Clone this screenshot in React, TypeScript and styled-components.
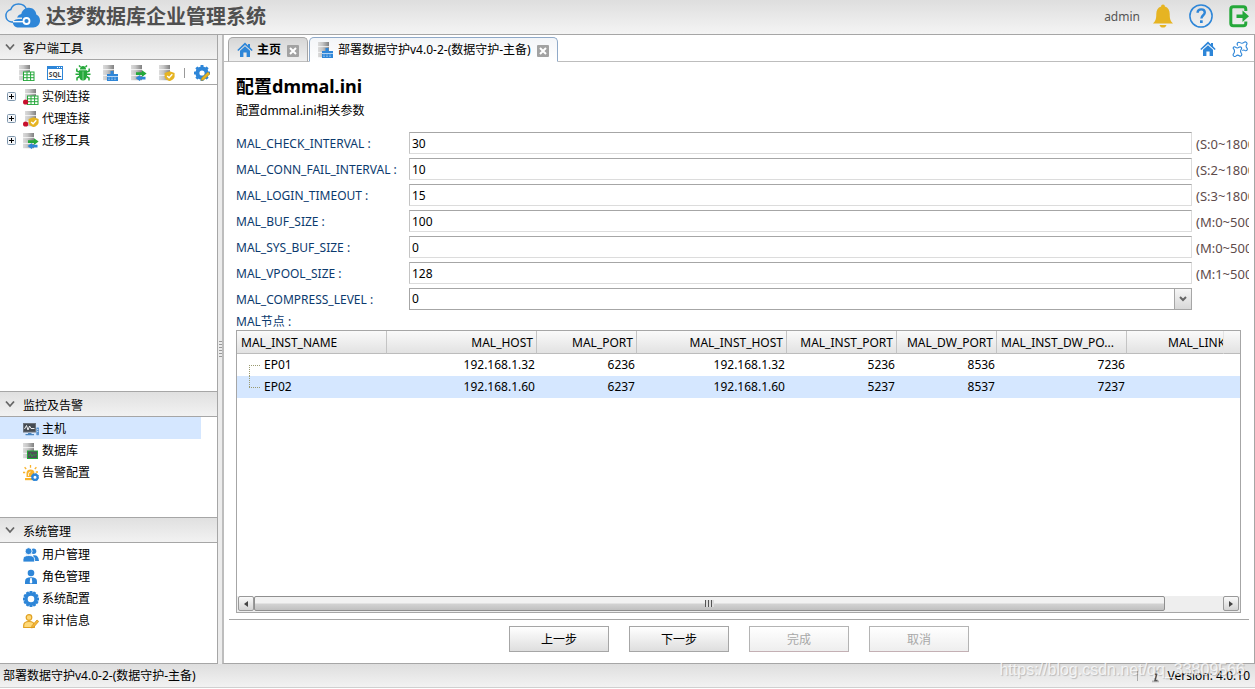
import React from 'react';
import styled, { createGlobalStyle, css } from 'styled-components';

const line = '#a6a6a6';
const blue = '#2e86d8';
const green = '#25a83a';
const gold = '#e6b422';
const selected = '#d5e7ff';

const GlobalStyle = createGlobalStyle`
  *, *::before, *::after { box-sizing: border-box; }
  body {
    margin: 0;
    background: #fff;
    color: #000;
    font: 12px/16px "Noto Sans", "Noto Sans CJK SC", sans-serif;
  }
  button, input, select { font: inherit; color: inherit; margin: 0; }
  svg { display: block; flex: none; }
`;

/* ---------- icons ---------- */

type IconProps = { size?: number; children?: React.ReactNode; box?: string };
const Icon = ({ size = 16, box = '0 0 16 16', children }: IconProps) => (
  <svg width={size} height={size} viewBox={box} aria-hidden="true">
    {children}
  </svg>
);

const Rack = ({ x = 0 }: { x?: number }) => (
  <g>
    <rect x={x} y="0" width="11" height="4.4" fill="url(#rack)" />
    <rect x={x} y="5" width="11" height="5" fill="url(#rack)" />
    <rect x={x} y="10.6" width="11" height="4.6" fill="url(#rack)" />
    <path d={`M${x} 4.7h11M${x} 10.3h11`} stroke="#f6f6f6" strokeWidth=".6" />
  </g>
);

const Sheet = () => (
  <g>
    <rect x="4.5" y="7" width="10.5" height="8.6" fill="#fff" stroke={green} strokeWidth="1" />
    <path d="M4.5 9.8h10.5M4.5 12.7h10.5M8 7v8.6M11.6 7v8.6" stroke={green} strokeWidth="1" />
  </g>
);
const Shield = () => (
  <g>
    <path d="M10.6 6.2l5 1.900v3.100c0 2.300-1.900 3.800-5 5-3.100-1.200-5-2.700-5-5V8.100z" fill={gold} />
    <path d="M8.200 10.900l1.900 1.900 3.200-3.500" fill="none" stroke="#fff" strokeWidth="1.400" />
  </g>
);
const Arrows = () => (
  <g>
    <path d="M5 7.200h6V5.200l4.600 3.400-4.600 3.300V9.900H5z" fill={green} />
    <path d="M14.500 11.800h-5.400V10l-4.600 3.100 4.600 3.100v-1.800h5.400z" fill={blue} />
  </g>
);
const RedDot = () => <circle cx="2.600" cy="13" r="2.600" fill="#c8102e" />;

const ServerSheet = () => <Icon><Rack /><Sheet /></Icon>;
const ServerShield = () => <Icon><Rack /><Shield /></Icon>;
const ServerArrows = () => <Icon><Rack /><Arrows /></Icon>;
const ServerDeploy = () => (
  <Icon>
    <Rack />
    <path d="M4 9h3.500V6h3v3H15v7H4z" fill={blue} />
    <path d="M4 11.500h11M5.500 14.500h1M8.500 14.500h1M11.500 14.500h1M5.500 13h1M8.500 13h1M11.500 13h1" stroke="#d5e9fb" strokeWidth=".8" />
  </Icon>
);
const ServerSheetDot = () => <Icon><Rack x={2} /><Sheet /><RedDot /></Icon>;
const ServerShieldDot = () => <Icon><Rack x={2} /><Shield /><RedDot /></Icon>;
const ServerMonitor = () => (
  <Icon>
    <Rack />
    <rect x="4.500" y="8" width="10" height="7.500" fill="#4d5257" stroke={green} />
    <path d="M6 13l1.500-2.500 1.500 3 1.500-2 1.500 1 1.500-1.500" fill="none" stroke={green} strokeWidth=".9" />
  </Icon>
);
const SqlIcon = () => (
  <Icon>
    <rect x=".5" y="1.500" width="15" height="13" fill="#fff" stroke={blue} />
    <path d="M0 1h16v3H0z" fill={blue} />
    <path d="M10 2.500h1M12 2.500h1M14 2.500h1" stroke="#fff" strokeWidth="1" />
    <text x="8" y="11.800" textAnchor="middle" fontSize="6.500" fontWeight="700" fontFamily="Noto Sans" fill="#444">SQL</text>
  </Icon>
);
const BugIcon = () => (
  <Icon>
    <path d="M5 4.500a3 3.500 0 0 1 6 0z" fill={green} />
    <path d="M4 5.200h8v5.300c0 3-1.700 5-4 5s-4-2-4-5z" fill={green} />
    <path d="M5.500 2L4 .5M10.500 2L12 .5M4 7L1.800 6V3.500M12 7l2.200-1V3.500M4 9.300H.5M12 9.300h3.500M4.500 11.500L2 13v2.500M11.500 11.500L14 13v2.500" fill="none" stroke={green} strokeWidth="1.500" />
    <path d="M8 6.500v8.500" stroke="#9fe0a8" strokeWidth=".8" />
  </Icon>
);

const teeth = (n: number) =>
  Array.from({ length: n }, (_, i) => (
    <rect key={i} x="6.500" y="0" width="3" height="4" rx=".5" fill={blue} transform={`rotate(${(360 / n) * i} 8 8)`} />
  ));
const GearIcon = () => (
  <Icon>
    {teeth(12)}
    <circle cx="8" cy="8" r="5" fill="none" stroke={blue} strokeWidth="3.400" />
  </Icon>
);
const GearPencil = () => (
  <Icon>
    {teeth(8)}
    <circle cx="8" cy="8" r="4.600" fill="none" stroke={blue} strokeWidth="4" />
    <path d="M7 15.500l.8-2.700L14 7l1.900 1.900-6.200 6z" fill={gold} stroke="#b98a1e" strokeWidth=".5" />
  </Icon>
);
const HostIcon = () => (
  <Icon>
    <rect x="0" y="2" width="13" height="9.500" fill="#6c727a" />
    <rect x="1" y="3" width="11" height="7.500" fill="#454b52" />
    <path d="M1.500 8l2-3.500 1.500 4.500 1.600-4 1.400 2.500h3.500" fill="none" stroke="#fff" strokeWidth=".9" />
    <path d="M5 12h3.500v1H11v1.200H2.500V13H5z" fill="#4a85c0" />
    <rect x="13.300" y="6.500" width="2.700" height="7.700" rx=".6" fill="#5b93cf" />
    <path d="M14 8.500h1.300M14 10.500h1.300" stroke="#fff" strokeWidth=".6" />
  </Icon>
);
const AlarmIcon = () => (
  <Icon>
    <path d="M3.500 12V8.500a4 4 0 0 1 8 0V12z" fill="#f8b32c" />
    <path d="M2 13h9v2.200H2z" fill="#f8b32c" />
    <path d="M7.500 2.800V0M3.200 4L1.600 2.200M11.800 4l1.600-1.800M2.200 7.500H0M12.800 7H15" stroke="#f8b32c" strokeWidth="1.300" />
    <path d="M5.500 11V9a2 2 0 0 1 2-2" fill="none" stroke="#fff" strokeWidth=".8" />
    <circle cx="12" cy="12.200" r="2.600" fill="#fff" stroke={blue} strokeWidth="2.200" />
    <circle cx="12" cy="12.200" r="3.700" fill="none" stroke={blue} strokeWidth="1" strokeDasharray="1.400 1.500" />
  </Icon>
);
const UsersIcon = () => (
  <Icon>
    <circle cx="10.600" cy="4.200" r="2.700" fill={blue} />
    <path d="M10 8.500c3.700-.7 5.700 1.300 6 5.500h-4z" fill={blue} />
    <circle cx="5.600" cy="4.200" r="3.500" fill={blue} stroke="#fff" strokeWidth=".9" />
    <path d="M0 15V12.500c0-2.600 2-4 5.800-4s5.800 1.400 5.800 4V15z" fill={blue} stroke="#fff" strokeWidth=".8" />
  </Icon>
);
const RoleIcon = () => (
  <Icon>
    <circle cx="8" cy="4" r="3.300" fill={blue} />
    <path d="M2 15v-2.500C2 9.700 4 8.300 8 8.300s6 1.400 6 4.200V15z" fill={blue} />
    <path d="M7.300 9h1.400l.6 4.500-1.300 1.300-1.300-1.300z" fill="#fff" />
  </Icon>
);
const AuditIcon = () => (
  <Icon>
    <circle cx="6" cy="4.500" r="2.800" fill="#ffd978" stroke="#e0a021" strokeWidth="1.200" />
    <path d="M.7 14.500v-2c0-2.600 1.500-4 5.300-4s5.300 1.400 5.300 4v2z" fill="#ffd978" stroke="#e0a021" strokeWidth="1.200" />
    <path d="M8.500 15l.5-2.300 5-5.700 1.700 1.400-5 5.800z" fill="#f4b83a" stroke="#d9961a" strokeWidth=".8" />
  </Icon>
);
const HomeIcon = () => (
  <Icon>
    <path d="M8 .6L.3 8l1 1L8 3l6.700 6 1-1L13 5.300V2h-2v1.400z" fill={blue} />
    <path d="M8 4.200l5 4.500V15H9.600v-4.500H6.400V15H3V8.700z" fill={blue} />
  </Icon>
);
const PuzzleIcon = () => (
  <Icon>
    <path
      d="M2 6.800C.2 5.600 1.800 3.400 3.500 4.700c1.200 1 2.300 1 3.400.1 1.700-1.300 3.500.5 2.300 2-.9 1.400-.9 2.600.1 4 1.300 1.700-.4 3.600-2 2.400-1.200-.9-2-.9-3.200.1-1.700 1.600-3.800-.2-2.600-2 1.100-1.500 1.300-3 .5-4.500z"
      fill="none" stroke={blue} strokeWidth="1.100" transform="translate(0 1.500)"
    />
    <path
      d="M5.800 4.600C4.200 2.700 6 .4 8 1.600c1.500.9 2.700.9 4-.2 1.800-1.300 3.800.6 2.600 2.200-.8 1.200-.7 2.200.2 3.300 1.300 1.800-.2 3.400-1.900 2.500-1-.6-1.700-.5-2.600.1"
      fill="none" stroke={blue} strokeWidth="1.100"
    />
  </Icon>
);
const CloudLogo = () => (
  <svg width="36" height="26" viewBox="0 0 36 26" aria-hidden="true">
    <path d="M9 19H7.500A6.300 6.300 0 0 1 6.800 6.600C8 2.800 11 1 14.500 1c4 0 7 2.300 8 5.600" fill="none" stroke={blue} strokeWidth="1.500" />
    <path d="M8.500 19c1.500-2 3.500-3 6-3h3.500v-1.500h-5c1-2.200 2.500-3.200 4.300-3.600C18.300 7 21.500 4.800 25 4.800c4 0 7 2.900 7.300 6.700 2.200 1 3.700 3.200 3.700 6 0 4-3 6.900-6.800 6.900H13.500c-2.500 0-4.300-2-5-5.400z" fill={blue} />
    <path d="M9 18.700h11" stroke="#fff" strokeWidth="1.300" />
    <circle cx="22.500" cy="18" r="3" fill="none" stroke="#fff" strokeWidth="1.800" />
  </svg>
);
const BellIcon = () => (
  <Icon size={24} box="0 0 24 24">
    <path d="M12 .5c1.200 0 1.900.8 1.900 1.900 3.300 1 4.800 3.700 4.800 7.600 0 5 .8 7 3.300 9.500H2c2.500-2.500 3.300-4.500 3.300-9.500 0-3.900 1.500-6.600 4.800-7.600 0-1.100.7-1.900 1.900-1.900z" fill={gold} />
    <path d="M8.500 21h7c-.5 1.700-1.700 2.600-3.500 2.600S9 22.700 8.500 21z" fill={gold} />
  </Icon>
);
const HelpIcon = () => (
  <Icon size={24} box="0 0 24 24">
    <circle cx="12" cy="12" r="11.100" fill="none" stroke={blue} strokeWidth="1.500" />
    <path d="M8.600 8.800c0-2.200 1.500-3.400 3.600-3.400 2.200 0 3.600 1.200 3.600 3.100 0 2.800-3.400 2.700-3.400 6" fill="none" stroke={blue} strokeWidth="2.400" />
    <rect x="11" y="16.300" width="2.700" height="2.700" fill={blue} />
  </Icon>
);
const ExitIcon = () => (
  <Icon size={24} box="0 0 24 24">
    <path d="M18.800 7V5.200c0-1.600-.8-2.400-2.400-2.400H6.200c-1.600 0-2.400.8-2.400 2.400v14.100c0 1.600.8 2.400 2.400 2.400h10.200c1.600 0 2.400-.8 2.400-2.400v-1.800" fill="none" stroke={green} strokeWidth="3" />
    <path d="M9.500 10.500h6V6.500l6.500 5.700-6.500 5.700v-4h-6z" fill={green} />
  </Icon>
);
const Chevron = () => (
  <svg width="10" height="8" viewBox="0 0 10 8" aria-hidden="true">
    <path d="M1 1.500l4 4.500 4-4.500" fill="none" stroke="#666" strokeWidth="1.800" />
  </svg>
);
const CloseIcon = () => (
  <svg width="12" height="12" viewBox="0 0 12 12" aria-hidden="true">
    <rect width="12" height="12" rx="1" fill="#a2a2a2" />
    <path d="M3 3l6 6M9 3l-6 6" stroke="#fff" strokeWidth="2" />
  </svg>
);
const Expander = () => (
  <svg width="9" height="9" viewBox="0 0 9 9" aria-hidden="true">
    <rect x=".5" y=".5" width="8" height="8" rx="1" fill="#f3f5f8" stroke="#7f97ad" />
    <path d="M2 4.500h5M4.500 2v5" stroke="#000" />
  </svg>
);
const InfoIcon = () => (
  <svg width="12" height="16" viewBox="0 0 12 16" aria-hidden="true">
    <path d="M2 12.500h7v1.800H2z" fill="#b5b5b5" />
    <path d="M7.600 2.200L7 4.400M4.500 6.300h2.200L5 12.400h2.500" fill="none" stroke="#555" strokeWidth="1.500" />
  </svg>
);

/* ---------- frame ---------- */

const Page = styled.div`
  display: flex;
  flex-direction: column;
  height: 100vh;
  padding-bottom: 1px;
`;
const Header = styled.header`
  display: flex;
  align-items: center;
  justify-content: space-between;
  height: 35px;
  padding: 0 4px;
  border-bottom: 1px solid ${line};
  background: linear-gradient(#dedede, #f4f4f4);
`;
const Brand = styled.h1`
  display: flex;
  align-items: center;
  gap: 6px;
  margin: 0;
  color: #4f4f4f;
  font-size: 20px;
  line-height: 28px;
  white-space: nowrap;
  svg { margin-bottom: 2px; }
`;
const Account = styled.div`
  display: flex;
  align-items: center;
  gap: 11px;
  color: #555;
`;
const AccountIcons = styled.div`
  display: flex;
  gap: 14px;
  padding-bottom: 2px;
`;
const IconButton = styled.button<{ $size?: number }>`
  display: flex;
  align-items: center;
  justify-content: center;
  width: ${(p) => p.$size ?? 20}px;
  height: ${(p) => p.$size ?? 20}px;
  padding: 0;
  border: 0;
  background: none;
`;
const Body = styled.div`
  display: flex;
  flex: 1;
  min-height: 0;
`;
const Sidebar = styled.aside`
  display: flex;
  flex: none;
  flex-direction: column;
  width: 218px;
  border-right: 1px solid ${line};
  border-bottom: 1px solid ${line};
`;
const Splitter = styled.div`
  display: flex;
  flex: none;
  align-items: center;
  justify-content: center;
  width: 4px;
  background: #ececec;
`;
const Grip = styled.span`
  width: 3px;
  height: 18px;
  background: repeating-linear-gradient(#999 0 1px, #ececec 1px 3px);
`;

/* ---------- sidebar ---------- */

const Panel = styled.section<{ $height?: number }>`
  flex: ${(p) => (p.$height ? `0 0 ${p.$height}px` : '1')};
  min-height: 0;
  overflow: hidden;
`;
const PanelTitle = styled.h2<{ $ruled?: boolean }>`
  display: flex;
  align-items: center;
  gap: 8px;
  height: ${(p) => (p.$ruled ? 26 : 25)}px;
  margin: 0;
  padding: 4px 5px 0;
  border-bottom: 1px solid ${line};
  ${(p) => p.$ruled && css`border-top: 1px solid ${line};`}
  background: linear-gradient(#e0e0e0, #f2f2f2);
  font-size: 12px;
  font-weight: 400;
  svg { margin-bottom: 4px; }
`;
const Toolbar = styled.div`
  display: flex;
  align-items: center;
  gap: 8px;
  height: 25px;
  padding: 1px 4px 0 17px;
  border-bottom: 1px solid ${line};
`;
const ToolDivider = styled.span`
  width: 1px;
  height: 10px;
  margin: 0 -1px;
  background: #999;
`;
const List = styled.ul`
  margin: 0;
  padding: 0;
  list-style: none;
`;
const Item = styled.li<{ $active?: boolean }>`
  width: 201px;
  background: ${(p) => (p.$active ? selected : 'none')};
`;
const ItemLink = styled.a`
  display: flex;
  align-items: center;
  gap: 3px;
  height: 22px;
  padding: 2px 0 0 7px;
  color: #000;
  text-decoration: none;
`;
const Toggle = styled.span`
  width: 13px;
  padding-bottom: 2px;
`;

/* ---------- workspace ---------- */

const Main = styled.main`
  display: flex;
  flex: 1;
  flex-direction: column;
  min-width: 0;
  border: solid ${line};
  border-width: 0 1px 1px 2px;
  border-left-color: #bdbdbd;
`;
const TabBar = styled.div`
  display: flex;
  align-items: flex-end;
  justify-content: space-between;
  height: 27px;
  padding-left: 4px;
  box-shadow: inset 0 -1px #bdbdbd;
`;
const Tabs = styled.div`
  display: flex;
  gap: 1px;
`;
const Tab = styled.div<{ $active?: boolean }>`
  display: flex;
  align-items: center;
  gap: 4px;
  height: 25px;
  padding: 0 7px 0 8px;
  border: 1px solid ${(p) => (p.$active ? '#8fa9c8' : '#a6a6a6')};
  border-bottom-color: ${(p) => (p.$active ? '#fff' : '#bdbdbd')};
  border-radius: 5px 5px 0 0;
  background: ${(p) => (p.$active ? 'linear-gradient(#f3f5f8, #fff)' : 'linear-gradient(#d6d6d6, #efefef)')};
  font-weight: ${(p) => (p.$active ? 400 : 700)};
  white-space: nowrap;
  button { margin: 2px 0 0 1px; }
`;
const TabActions = styled.div`
  display: flex;
  align-self: center;
  gap: 12px;
  padding: 1px 4px 0 0;
`;
const Content = styled.div`
  display: flex;
  flex: 1;
  flex-direction: column;
  min-height: 0;
  padding: 11px 5px 0 12px;
`;
const Title = styled.h2`
  margin: 0 0 4px;
  font-size: 18px;
  line-height: 26px;
`;
const Lead = styled.p`
  margin: 0 0 11px;
`;
const Form = styled.form`
  display: flex;
  flex: 1;
  flex-direction: column;
  min-height: 0;
`;
const Field = styled.div`
  display: grid;
  grid-template-columns: 173px minmax(0, 1fr) 57px;
  align-items: center;
  height: 26px;
`;
const Label = styled.label`
  padding-top: 2px;
  color: #0b3a6e;
  white-space: nowrap;
`;
const TextBox = styled.input`
  width: 100%;
  height: 22px;
  padding: 0 2px;
  border: 1px solid #dcdcdc;
  border-top-color: ${line};
  border-left-color: #c4c4c4;
  outline: 0;
  background: #fff;
`;
const SelectBox = styled.div`
  display: flex;
  height: 22px;
  border: 1px solid ${line};
`;
const Select = styled.select`
  flex: 1;
  padding: 0 2px;
  border: 0;
  outline: 0;
  appearance: none;
  background: #fff;
`;
const Arrow = styled.span`
  display: flex;
  align-items: center;
  justify-content: center;
  width: 17px;
  border-left: 1px solid ${line};
  background: linear-gradient(#f6f6f6, #d8d8d8);
`;
const Hint = styled.span`
  padding: 2px 0 0 4px;
  overflow: hidden;
  color: #5e4b4b;
  font-size: 13px;
  white-space: nowrap;
`;
const Caption = styled.div`
  height: 18px;
  padding-top: 2px;
  color: #0b3a6e;
`;
const GridBox = styled.div`
  display: flex;
  flex: 1;
  flex-direction: column;
  min-height: 0;
  margin-right: 8px;
  overflow: hidden;
  border: 1px solid ${line};
`;
const Table = styled.table`
  width: 100%;
  border-collapse: separate;
  border-spacing: 0;
  table-layout: fixed;
`;
const HeadCell = styled.th<{ $start?: boolean; $clip?: boolean }>`
  height: 23px;
  padding: 2px 3px 0 ${(p) => (p.$clip ? 41 : 4)}px;
  ${(p) => p.$clip && css`padding-right: 0;`}
  overflow: hidden;
  border-right: 1px solid ${(p) => (p.$clip ? '#e4e4e4' : '#c4c4c4')};
  border-bottom: 1px solid #bcbcbc;
  background: linear-gradient(#fafafa, #e2e2e2);
  font-weight: 400;
  text-align: ${(p) => (p.$start || p.$clip ? 'left' : 'right')};
  white-space: nowrap;
  &:last-child { border-right: 0; }
`;
const Row = styled.tr<{ $active?: boolean }>`
  background: ${(p) => (p.$active ? selected : '#fff')};
`;
const Cell = styled.td`
  height: 22px;
  padding: 0 2px;
  text-align: right;
`;
const NodeName = styled.div`
  display: flex;
  align-items: center;
  gap: 4px;
  height: 22px;
  padding-left: 10px;
`;
const Branch = styled.span<{ $last: boolean }>`
  width: 11px;
  height: 22px;
  &::before, &::after {
    display: block;
    height: 11px;
    border: 0 dotted #9a9a70;
    content: '';
  }
  &::before { border-left-width: ${(p) => (p.$last ? 1 : 0)}px; }
  &::after { border-top-width: 1px; border-left-width: ${(p) => (p.$last ? 0 : 1)}px; }
`;
const ScrollBar = styled.div`
  display: flex;
  height: 16px;
  margin-top: auto;
  padding: 0 1px;
  background: #eee;
`;
const ScrollButton = styled.button`
  display: flex;
  align-items: center;
  justify-content: center;
  width: 16px;
  height: 15px;
  padding: 0;
  border: 1px solid #999;
  border-radius: 2px;
  background: linear-gradient(#fafafa, #d4d4d4);
`;
const Track = styled.div`
  flex: 1;
`;
const Thumb = styled.div`
  display: flex;
  align-items: center;
  justify-content: center;
  width: 94%;
  height: 15px;
  border: 1px solid #8f8f8f;
  border-radius: 2px;
  background: linear-gradient(#f2f2f2 0 45%, #d2d2d2 55%, #c0c0c0);
`;
const ThumbGrip = styled.span`
  width: 9px;
  height: 7px;
  background: repeating-linear-gradient(90deg, #555 0 1px, #ddd 1px 3px);
`;
const Actions = styled.div`
  display: flex;
  justify-content: center;
  gap: 20px;
  height: 44px;
  margin: 6px 0 0 -7px;
  padding-top: 6px;
  border-top: 1px solid ${line};
`;
const Button = styled.button`
  width: 100px;
  height: 26px;
  padding: 2px 0 0;
  border: 1px solid ${line};
  background: linear-gradient(#fff, #dedede);
  &:disabled {
    border-color: #b4b4b4;
    border-bottom-color: #c4b0b4;
    background: linear-gradient(#fff, #eee);
    color: #a8a8a8;
  }
`;

/* ---------- status bar ---------- */

const StatusBar = styled.footer`
  position: relative;
  display: flex;
  align-items: center;
  justify-content: space-between;
  height: 24px;
  padding: 0 5px 0 3px;
  border-bottom: 1px solid #d0d0d0;
  background: linear-gradient(#dedede, #f2f2f2);
`;
const Version = styled.div`
  display: flex;
  align-items: center;
  gap: 6px;
  &::before {
    width: 1px;
    height: 10px;
    margin-right: 6px;
    background: #aaa;
    content: '';
  }
`;
const Watermark = styled.span`
  position: absolute;
  right: 10px;
  bottom: 7px;
  color: rgba(255, 255, 255, 0.75);
  font: 16px/20px "Liberation Sans", sans-serif;
  text-shadow: 1px 1px 1px rgba(0, 0, 0, 0.2);
  pointer-events: none;
`;

/* ---------- data ---------- */

const tools = [
  ['新建实例', ServerSheet], ['SQL', SqlIcon], ['调试', BugIcon],
  ['部署', ServerDeploy], ['迁移', ServerArrows], ['代理', ServerShield],
] as const;
const connections = [
  ['实例连接', ServerSheetDot], ['代理连接', ServerShieldDot], ['迁移工具', ServerArrows],
] as const;
const monitoring = [
  ['主机', HostIcon], ['数据库', ServerMonitor], ['告警配置', AlarmIcon],
] as const;
const system = [
  ['用户管理', UsersIcon], ['角色管理', RoleIcon], ['系统配置', GearIcon], ['审计信息', AuditIcon],
] as const;
const fields = [
  ['MAL_CHECK_INTERVAL', '30', '(S:0~1800)'],
  ['MAL_CONN_FAIL_INTERVAL', '10', '(S:2~1800)'],
  ['MAL_LOGIN_TIMEOUT', '15', '(S:3~1800)'],
  ['MAL_BUF_SIZE', '100', '(M:0~500)'],
  ['MAL_SYS_BUF_SIZE', '0', '(M:0~500)'],
  ['MAL_VPOOL_SIZE', '128', '(M:1~500)'],
];
type Column = { name: string; width?: number; start?: boolean };
const columns: Column[] = [
  { name: 'MAL_INST_NAME', width: 150, start: true },
  { name: 'MAL_HOST', width: 150 },
  { name: 'MAL_PORT', width: 100 },
  { name: 'MAL_INST_HOST', width: 150 },
  { name: 'MAL_INST_PORT', width: 110 },
  { name: 'MAL_DW_PORT', width: 100 },
  { name: 'MAL_INST_DW_PO...', width: 130, start: true },
  { name: 'MAL_LINK' },
];
const nodes = [
  ['EP01', '192.168.1.32', '6236', '192.168.1.32', '5236', '8536', '7236', ''],
  ['EP02', '192.168.1.60', '6237', '192.168.1.60', '5237', '8537', '7237', ''],
];

const Col = styled.col<{ $width?: number }>`
  width: ${(p) => (p.$width ? `${p.$width}px` : 'auto')};
`;

type EntryList = readonly (readonly [string, React.ComponentType])[];
const Entries = ({ items, active, tree }: { items: EntryList; active?: string; tree?: boolean }) => (
  <List>
    {items.map(([name, Glyph]) => (
      <Item key={name} $active={name === active}>
        <ItemLink href="#">
          <Toggle>{tree && <Expander />}</Toggle>
          <Glyph />
          {name}
        </ItemLink>
      </Item>
    ))}
  </List>
);

export default function App() {
  return (
    <Page>
      <GlobalStyle />
      <svg width="0" height="0" style={{ position: 'absolute' }} aria-hidden="true">
        <defs>
          <linearGradient id="rack">
            <stop offset="0" stopColor="#dcdcdc" />
            <stop offset=".4" stopColor="#c6c6c6" />
            <stop offset="1" stopColor="#808080" />
          </linearGradient>
        </defs>
      </svg>
      <Header>
        <Brand><CloudLogo />达梦数据库企业管理系统</Brand>
        <Account>
          <span>admin</span>
          <AccountIcons>
            <IconButton $size={24} aria-label="告警"><BellIcon /></IconButton>
            <IconButton $size={24} aria-label="帮助"><HelpIcon /></IconButton>
            <IconButton $size={24} aria-label="退出"><ExitIcon /></IconButton>
          </AccountIcons>
        </Account>
      </Header>
      <Body>
        <Sidebar>
          <Panel>
            <PanelTitle><Chevron />客户端工具</PanelTitle>
            <Toolbar>
              {tools.map(([name, Glyph]) => (
                <IconButton key={name} aria-label={name}><Glyph /></IconButton>
              ))}
              <ToolDivider />
              <IconButton aria-label="设置"><GearPencil /></IconButton>
            </Toolbar>
            <Entries items={connections} tree />
          </Panel>
          <Panel $height={126}>
            <PanelTitle $ruled><Chevron />监控及告警</PanelTitle>
            <Entries items={monitoring} active="主机" />
          </Panel>
          <Panel $height={146}>
            <PanelTitle $ruled><Chevron />系统管理</PanelTitle>
            <Entries items={system} />
          </Panel>
        </Sidebar>
        <Splitter><Grip /></Splitter>
        <Main>
          <TabBar>
            <Tabs>
              <Tab><HomeIcon />主页<IconButton $size={14} aria-label="关闭"><CloseIcon /></IconButton></Tab>
              <Tab $active><ServerDeploy />部署数据守护v4.0-2-(数据守护-主备)<IconButton $size={14} aria-label="关闭"><CloseIcon /></IconButton></Tab>
            </Tabs>
            <TabActions>
              <IconButton aria-label="主页"><HomeIcon /></IconButton>
              <IconButton aria-label="插件"><PuzzleIcon /></IconButton>
            </TabActions>
          </TabBar>
          <Content>
            <Title>配置dmmal.ini</Title>
            <Lead>配置dmmal.ini相关参数</Lead>
            <Form onSubmit={(e) => e.preventDefault()}>
              {fields.map(([name, value, hint]) => (
                <Field key={name}>
                  <Label htmlFor={name}>{name} :</Label>
                  <TextBox id={name} defaultValue={value} />
                  <Hint>{hint}</Hint>
                </Field>
              ))}
              <Field>
                <Label htmlFor="MAL_COMPRESS_LEVEL">MAL_COMPRESS_LEVEL :</Label>
                <SelectBox>
                  <Select id="MAL_COMPRESS_LEVEL"><option>0</option></Select>
                  <Arrow>
                    <svg width="8" height="6" viewBox="0 0 8 6" aria-hidden="true">
                      <path d="M1 1l3 3 3-3" fill="none" stroke="#666" strokeWidth="2" />
                    </svg>
                  </Arrow>
                </SelectBox>
              </Field>
              <Caption>MAL节点 :</Caption>
              <GridBox>
                <Table>
                  <colgroup>
                    {columns.map(({ name, width }) => <Col key={name} $width={width} />)}
                    <Col $width={16} />
                  </colgroup>
                  <thead>
                    <tr>
                      {columns.map(({ name, width, start }) => (
                        <HeadCell key={name} $start={start} $clip={!width}>{name}</HeadCell>
                      ))}
                      <HeadCell />
                    </tr>
                  </thead>
                  <tbody>
                    {nodes.map(([name, ...cells], r) => (
                      <Row key={name} $active={r === 1}>
                        <Cell><NodeName><Branch $last={r === 1} />{name}</NodeName></Cell>
                        {cells.map((value, i) => <Cell key={i}>{value}</Cell>)}
                        <Cell />
                      </Row>
                    ))}
                  </tbody>
                </Table>
                <ScrollBar>
                  <ScrollButton type="button" aria-label="向左滚动">
                    <svg width="4" height="6" viewBox="0 0 4 6"><path d="M4 0v6L0 3z" fill="#444" /></svg>
                  </ScrollButton>
                  <Track><Thumb><ThumbGrip /></Thumb></Track>
                  <ScrollButton type="button" aria-label="向右滚动">
                    <svg width="4" height="6" viewBox="0 0 4 6"><path d="M0 0v6l4-3z" fill="#444" /></svg>
                  </ScrollButton>
                </ScrollBar>
              </GridBox>
              <Actions>
                <Button type="button">上一步</Button>
                <Button type="button">下一步</Button>
                <Button type="button" disabled>完成</Button>
                <Button type="button" disabled>取消</Button>
              </Actions>
            </Form>
          </Content>
        </Main>
      </Body>
      <StatusBar>
        <span>部署数据守护v4.0-2-(数据守护-主备)</span>
        <Version><InfoIcon />Version: 4.0.10</Version>
        <Watermark>https://blog.csdn.net/qq_33809566</Watermark>
      </StatusBar>
    </Page>
  );
}
